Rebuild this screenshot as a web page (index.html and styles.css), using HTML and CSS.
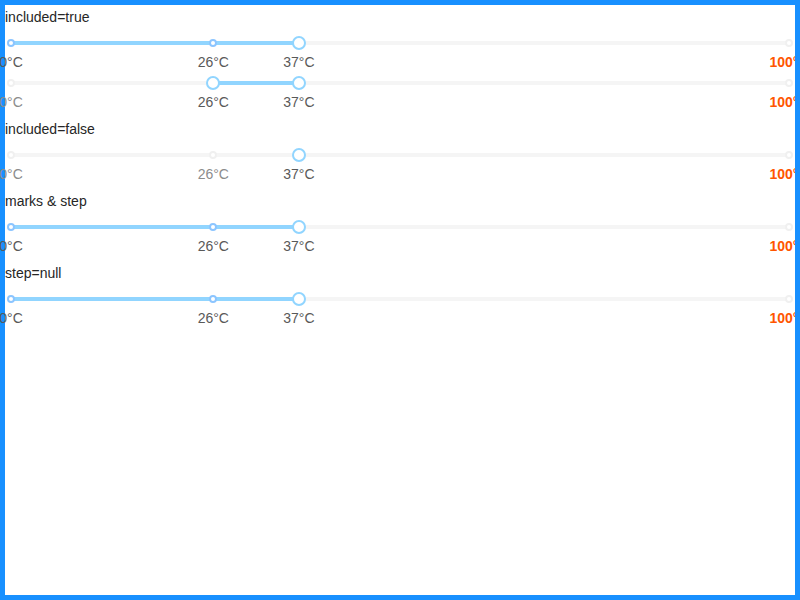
FILE: index.html
```html
<!DOCTYPE html>
<html lang="en">
<head>
<meta charset="utf-8">
<title>Slider marks</title>
<link rel="stylesheet" href="styles.css">
</head>
<body>
<div class="frame">
  <div class="label">included=true</div>
  <div class="slider">
    <div class="rail"></div>
    <div class="track" style="left:0%;width:37%"></div>
    <div class="steps">
      <span class="dot active" style="left:0%"></span>
      <span class="dot active" style="left:26%"></span>
      <span class="dot active" style="left:37%"></span>
      <span class="dot" style="left:100%"></span>
    </div>
    <div class="handle" style="left:37%"></div>
    <div class="marks">
      <span class="mark active" style="left:0%">0°C</span>
      <span class="mark active" style="left:26%">26°C</span>
      <span class="mark active" style="left:37%">37°C</span>
      <span class="mark hot" style="left:100%"><strong>100°C</strong></span>
    </div>
  </div>
  <div class="slider">
    <div class="rail"></div>
    <div class="track" style="left:26%;width:11%"></div>
    <div class="steps">
      <span class="dot" style="left:0%"></span>
      <span class="dot active" style="left:26%"></span>
      <span class="dot active" style="left:37%"></span>
      <span class="dot" style="left:100%"></span>
    </div>
    <div class="handle" style="left:26%"></div>
    <div class="handle" style="left:37%"></div>
    <div class="marks">
      <span class="mark" style="left:0%">0°C</span>
      <span class="mark active" style="left:26%">26°C</span>
      <span class="mark active" style="left:37%">37°C</span>
      <span class="mark hot" style="left:100%"><strong>100°C</strong></span>
    </div>
  </div>
  <div class="label">included=false</div>
  <div class="slider">
    <div class="rail"></div>
    <div class="steps">
      <span class="dot" style="left:0%"></span>
      <span class="dot" style="left:26%"></span>
      <span class="dot active" style="left:37%"></span>
      <span class="dot" style="left:100%"></span>
    </div>
    <div class="handle" style="left:37%"></div>
    <div class="marks">
      <span class="mark" style="left:0%">0°C</span>
      <span class="mark" style="left:26%">26°C</span>
      <span class="mark active" style="left:37%">37°C</span>
      <span class="mark hot" style="left:100%"><strong>100°C</strong></span>
    </div>
  </div>
  <div class="label">marks &amp; step</div>
  <div class="slider">
    <div class="rail"></div>
    <div class="track" style="left:0%;width:37%"></div>
    <div class="steps">
      <span class="dot active" style="left:0%"></span>
      <span class="dot active" style="left:26%"></span>
      <span class="dot active" style="left:37%"></span>
      <span class="dot" style="left:100%"></span>
    </div>
    <div class="handle" style="left:37%"></div>
    <div class="marks">
      <span class="mark active" style="left:0%">0°C</span>
      <span class="mark active" style="left:26%">26°C</span>
      <span class="mark active" style="left:37%">37°C</span>
      <span class="mark hot" style="left:100%"><strong>100°C</strong></span>
    </div>
  </div>
  <div class="label">step=null</div>
  <div class="slider">
    <div class="rail"></div>
    <div class="track" style="left:0%;width:37%"></div>
    <div class="steps">
      <span class="dot active" style="left:0%"></span>
      <span class="dot active" style="left:26%"></span>
      <span class="dot active" style="left:37%"></span>
      <span class="dot" style="left:100%"></span>
    </div>
    <div class="handle" style="left:37%"></div>
    <div class="marks">
      <span class="mark active" style="left:0%">0°C</span>
      <span class="mark active" style="left:26%">26°C</span>
      <span class="mark active" style="left:37%">37°C</span>
      <span class="mark hot" style="left:100%"><strong>100°C</strong></span>
    </div>
  </div>
</div>
</body>
</html>
```

FILE: styles.css
```css
* { box-sizing: border-box; }
html, body { margin: 0; padding: 0; background: #fff; }
body {
  font-family: "Liberation Sans", Arial, sans-serif;
  font-size: 14px;
  color: #262626;
}
.frame {
  width: 800px;
  height: 600px;
  border: 5px solid #1890ff;
  border-left: 0;
  padding-left: 5px;
  box-shadow: inset 5px 0 0 #1890ff;
  overflow: hidden;
}
.label {
  line-height: 22px;
  padding-top: 1px;
  margin-bottom: -1px;
  color: #262626;
}
.slider {
  position: relative;
  height: 12px;
  padding: 4px 0;
  margin: 10px 6px 28px;
}
.rail, .track, .steps {
  position: absolute;
  top: 4px;
  height: 4px;
}
.rail {
  left: 0;
  width: 100%;
  background: #f5f5f5;
  border-radius: 2px;
}
.track {
  background: #91d5ff;
  border-radius: 2px;
}
.steps {
  left: 0;
  width: 100%;
  background: transparent;
}
.dot {
  position: absolute;
  top: -2px;
  width: 8px;
  height: 8px;
  margin-left: -4px;
  background: #fff;
  border: 2px solid #f0f0f0;
  border-radius: 50%;
}
.dot.active { border-color: #8cc5ff; }
.handle {
  position: absolute;
  top: -1px;
  width: 14px;
  height: 14px;
  transform: translateX(-50%);
  background: #fff;
  border: 2px solid #91d5ff;
  border-radius: 50%;
}
.marks {
  position: absolute;
  top: 14px;
  left: 0;
  width: 100%;
  font-size: 14px;
}
.mark {
  position: absolute;
  display: inline-block;
  transform: translateX(-50%);
  white-space: nowrap;
  line-height: 22px;
  color: #8c8c8c;
}
.mark.active { color: #595959; }
.mark.hot { color: #f50; }
.mark.hot strong { font-weight: bold; }
```
